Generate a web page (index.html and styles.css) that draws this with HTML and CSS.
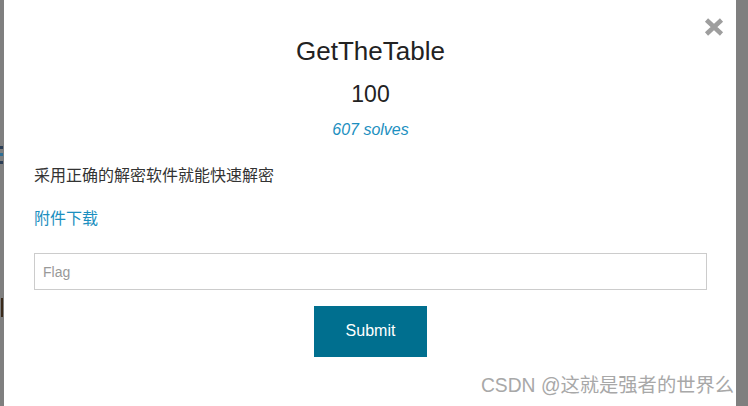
FILE: index.html
```html
<!DOCTYPE html>
<html lang="zh">
<head>
<meta charset="utf-8">
<title>GetTheTable</title>
<link rel="stylesheet" href="styles.css">
</head>
<body>
<div class="backdrop">
  <span class="peek peek-a"></span>
  <span class="peek peek-b"></span>
  <span class="peek peek-c"></span>
  <span class="peek peek-d"></span>
  <div class="modal">
    <button class="close" type="button" aria-label="Close">
      <svg width="20" height="18" viewBox="0 0 20 18"><path d="M2.5 2 L17.5 16 M17.5 2 L2.5 16" stroke="#9e9e9e" stroke-width="4.6" stroke-linecap="butt" fill="none"/></svg>
    </button>
    <h3 class="title">GetTheTable</h3>
    <h4 class="value">100</h4>
    <h5 class="solves">607 solves</h5>
    <p class="desc">采用正确的解密软件就能快速解密</p>
    <a class="file" href="#">附件下载</a>
    <form class="flag-form">
      <input class="flag" type="text" placeholder="Flag">
      <button class="submit" type="button">Submit</button>
    </form>
  </div>
  <div class="watermark">CSDN @这就是强者的世界么</div>
</div>
</body>
</html>
```

FILE: styles.css
```css
html, body {
  margin: 0;
  padding: 0;
  width: 748px;
  height: 406px;
  overflow: hidden;
}
body {
  background: #7f7f7f;
  font-family: "Liberation Sans", Arial, "Noto Sans CJK SC", sans-serif;
}
.backdrop {
  position: relative;
  width: 748px;
  height: 406px;
  padding-left: 4px;
  box-sizing: border-box;
}
.peek {
  position: absolute;
  left: 0;
  width: 3px;
}
.peek-a { top: 146px; height: 3px; background: #2b3d55; }
.peek-b { top: 153px; height: 3px; background: #2e6f95; }
.peek-c { top: 161px; height: 3px; background: #2b3d55; }
.peek-d { top: 298px; height: 19px; left: 1px; width: 2px; background: #3a2a1a; }

.modal {
  position: relative;
  width: 732px;
  height: 406px;
  background: #fff;
  box-sizing: border-box;
  padding: 36px 29px 0 30px;
  display: flex;
  flex-direction: column;
  align-items: stretch;
}
.close {
  position: absolute;
  top: 18px;
  right: 12px;
  padding: 0;
  margin: 0;
  border: 0;
  background: none;
  width: 20px;
  height: 18px;
  display: block;
}
.close svg { display: block; }
.title {
  margin: 0;
  text-align: center;
  font-size: 26px;
  line-height: 30px;
  font-weight: normal;
  color: #222;
}
.value {
  margin: 15px 0 0;
  text-align: center;
  font-size: 23px;
  line-height: 26px;
  font-weight: normal;
  color: #222;
}
.solves {
  margin: 13px 0 0;
  text-align: center;
  font-size: 16px;
  line-height: 20px;
  font-weight: normal;
  font-style: italic;
  color: #1c8fc0;
}
.desc {
  margin: 24px 0 0;
  font-size: 16px;
  line-height: 24px;
  color: #333;
  font-family: "Liberation Sans", "Noto Sans CJK SC", sans-serif;
}
.file {
  margin-top: 19px;
  font-size: 16px;
  line-height: 24px;
  color: #1c8fc0;
  text-decoration: none;
  align-self: flex-start;
  font-family: "Liberation Sans", "Noto Sans CJK SC", sans-serif;
}
.flag-form {
  margin: 22px 0 0;
  display: flex;
  flex-direction: column;
  align-items: center;
}
.flag {
  width: 673px;
  height: 37px;
  box-sizing: border-box;
  border: 1px solid #ccc;
  padding: 0 8px;
  font-size: 14px;
  font-family: "Liberation Sans", Arial, sans-serif;
  color: #555;
  outline: none;
  margin: 0;
  align-self: flex-start;
}
.flag::placeholder { color: #999; }
.submit {
  margin-top: 16px;
  width: 113px;
  height: 51px;
  border: 0;
  background: #006f8f;
  color: #fff;
  font-size: 16px;
  line-height: 20px;
  font-family: "Liberation Sans", Arial, sans-serif;
  padding: 0 0 2px;
}
.watermark {
  position: absolute;
  right: 14px;
  top: 374px;
  font-size: 19.3px;
  line-height: 24px;
  color: #a8a8a8;
  text-shadow: 0 0 1px #fff;
  font-family: "Liberation Sans", "Noto Sans CJK SC", sans-serif;
  white-space: nowrap;
}
```
